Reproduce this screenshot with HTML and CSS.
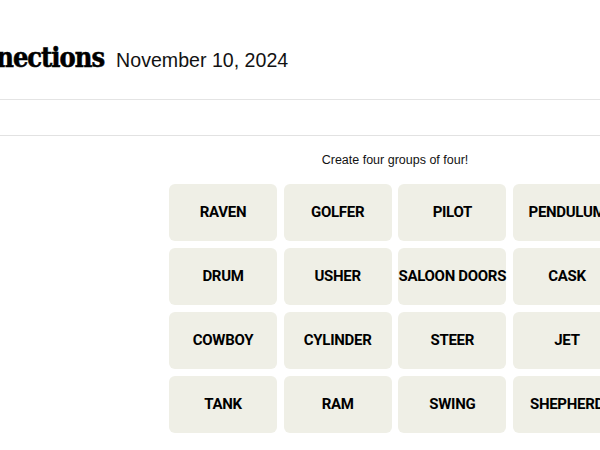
FILE: index.html
```html
<!DOCTYPE html>
<html lang="en">
<head>
<meta charset="utf-8">
<title>Connections</title>
<link rel="stylesheet" href="styles.css">
</head>
<body>
<header class="banner">
  <div class="banner-inner">
    <h1 class="title">Connections</h1>
    <span class="date">November 10, 2024</span>
  </div>
</header>
<div class="toolbar"></div>
<main class="game">
  <p class="prompt">Create four groups of four!</p>
  <div class="board">
    <button class="tile">RAVEN</button>
    <button class="tile">GOLFER</button>
    <button class="tile">PILOT</button>
    <button class="tile">PENDULUM</button>
    <button class="tile">DRUM</button>
    <button class="tile">USHER</button>
    <button class="tile">SALOON DOORS</button>
    <button class="tile">CASK</button>
    <button class="tile">COWBOY</button>
    <button class="tile">CYLINDER</button>
    <button class="tile">STEER</button>
    <button class="tile">JET</button>
    <button class="tile">TANK</button>
    <button class="tile">RAM</button>
    <button class="tile">SWING</button>
    <button class="tile">SHEPHERD</button>
  </div>
</main>
</body>
</html>
```
FILE: styles.css
```css
html, body {
  margin: 0;
  padding: 0;
  background: #ffffff;
  overflow: hidden;
}
body {
  width: 600px;
  height: 450px;
  font-family: "Liberation Sans", Arial, sans-serif;
  color: #121212;
}
.banner {
  height: 99px;
  border-bottom: 1px solid #e4e4e4;
  box-sizing: content-box;
  overflow: hidden;
}
.banner-inner {
  display: flex;
  align-items: baseline;
  gap: 12px;
  padding-top: 42px;
  margin-left: -54px;
  white-space: nowrap;
}
.title {
  margin: 0;
  font-family: "DejaVu Serif Condensed", "DejaVu Serif", serif;
  font-weight: 700;
  font-size: 27px;
  letter-spacing: -1px;
  -webkit-text-stroke: 0.5px #000;
  color: #000;
}
.date {
  font-family: "Liberation Sans", Arial, sans-serif;
  font-size: 19.6px;
  color: #121212;
}
.toolbar {
  height: 35px;
  border-bottom: 1px solid #e2e2e2;
}
.game {
  padding-left: 169px;
  width: 452px;
}
.prompt {
  margin: 0;
  padding-top: 16px;
  height: 32px;
  text-align: center;
  font-size: 12.5px;
  line-height: 16px;
  color: #121212;
}
.board {
  display: grid;
  grid-template-columns: repeat(4, 108px);
  grid-auto-rows: 57px;
  column-gap: 6.67px;
  row-gap: 7px;
}
.tile {
  border: none;
  margin: 0;
  padding: 0 0 1px;
  background: #efefe6;
  border-radius: 6px;
  font-family: Roboto, "Liberation Sans", Arial, sans-serif;
  font-weight: 700;
  font-size: 15px;
  letter-spacing: -0.3px;
  color: #000;
  white-space: nowrap;
  overflow: visible;
  display: flex;
  align-items: center;
  justify-content: center;
}
```
